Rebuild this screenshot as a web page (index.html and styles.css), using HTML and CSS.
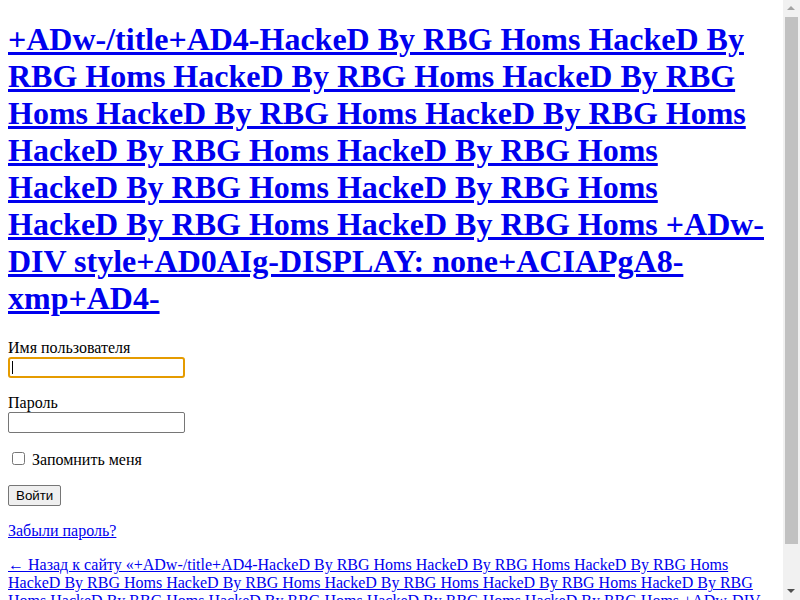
FILE: index.html
```html
<!DOCTYPE html>
<html lang="ru">
<head>
<meta charset="utf-8">
<title>Вход</title>
<link rel="stylesheet" href="styles.css">
</head>
<body class="login">
<div id="login">
<h1 class="site-title"><a href="#">+ADw-/title+AD4-HackeD By RBG Homs HackeD By RBG Homs HackeD By RBG Homs HackeD By RBG Homs HackeD By RBG Homs HackeD By RBG Homs HackeD By RBG Homs HackeD By RBG Homs HackeD By RBG Homs HackeD By RBG Homs HackeD By RBG Homs HackeD By RBG Homs +ADw-DIV style+AD0AIg-DISPLAY: none+ACIAPgA8-xmp+AD4-</a></h1>
<form class="login-form" name="loginform" action="#" method="post">
<p><label>Имя пользователя<br><input type="text" class="input input-focused" size="20"></label></p>
<p><label>Пароль<br><input type="password" class="input" size="20"></label></p>
<p class="forgetmenot"><label><input type="checkbox" class="check"> Запомнить меня</label></p>
<p class="submit"><input type="submit" class="button" value="Войти"></p>
</form>
<p class="nav"><a href="#">Забыли пароль?</a></p>
<p class="backtoblog"><a href="#">← Назад к сайту «+ADw-/title+AD4-HackeD By RBG Homs HackeD By RBG Homs HackeD By RBG Homs HackeD By RBG Homs HackeD By RBG Homs HackeD By RBG Homs HackeD By RBG Homs HackeD By RBG Homs HackeD By RBG Homs HackeD By RBG Homs HackeD By RBG Homs HackeD By RBG Homs +ADw-DIV style+AD0AIg-DISPLAY: none+ACIAPgA8-xmp+AD4-»</a></p>
</div>
<div class="fake-scrollbar" aria-hidden="true">
  <div class="sb-arrow sb-up"></div>
  <div class="sb-thumb"></div>
  <div class="sb-arrow sb-down"></div>
</div>
</body>
</html>
```
FILE: styles.css
```css
body.login {
  margin: 8px 25px 8px 8px;
  font-family: "Liberation Serif", "Times New Roman", serif;
  font-size: 16px;
  color: #000;
  background: #fff;
}
.site-title {
  font-size: 2em;
  font-weight: bold;
  margin: 13.44px 0 21.44px;
}
a {
  color: #0000ee;
}
.input {
  font-family: "Liberation Sans", Arial, sans-serif;
  font-size: 13.333px;
  width: 177px;
  height: 21px;
  box-sizing: border-box;
  padding: 1px 2px;
  border: 1px solid #767676;
  border-radius: 2px;
  background: #fff;
  margin: 0;
}
.input-focused {
  outline: none;
  border: 2px solid #e59b00;
  border-radius: 3px;
  background: #fff linear-gradient(#000, #000) no-repeat 2px 2px / 1px 13px;
}
.check {
  width: 13px;
  height: 13px;
  margin: 3px 3px 3px 4px;
}
.button {
  font-family: "Liberation Sans", Arial, sans-serif;
  font-size: 13.333px;
  padding: 1px 7px;
  height: 21px;
  border: 1px solid #767676;
  border-radius: 2px;
  background: #efefef;
  color: #000;
  margin: 0;
}
.fake-scrollbar {
  position: fixed;
  top: 0;
  right: 0;
  width: 17px;
  height: 100%;
  background: #f1f1f1;
  display: flex;
  flex-direction: column;
  align-items: center;
}
.sb-arrow {
  width: 17px;
  height: 17px;
  flex: none;
  position: relative;
}
.sb-up::after,
.sb-down::after {
  content: "";
  position: absolute;
  left: 4px;
  width: 0;
  height: 0;
  border-left: 4px solid transparent;
  border-right: 4px solid transparent;
}
.sb-up::after {
  top: 6px;
  border-bottom: 4px solid #a3a3a3;
}
.sb-down::after {
  bottom: 7px;
  border-top: 4px solid #505050;
}
.sb-thumb {
  width: 13px;
  height: 527px;
  background: #c1c1c1;
  flex: none;
}
.sb-down {
  margin-top: auto;
}
```
